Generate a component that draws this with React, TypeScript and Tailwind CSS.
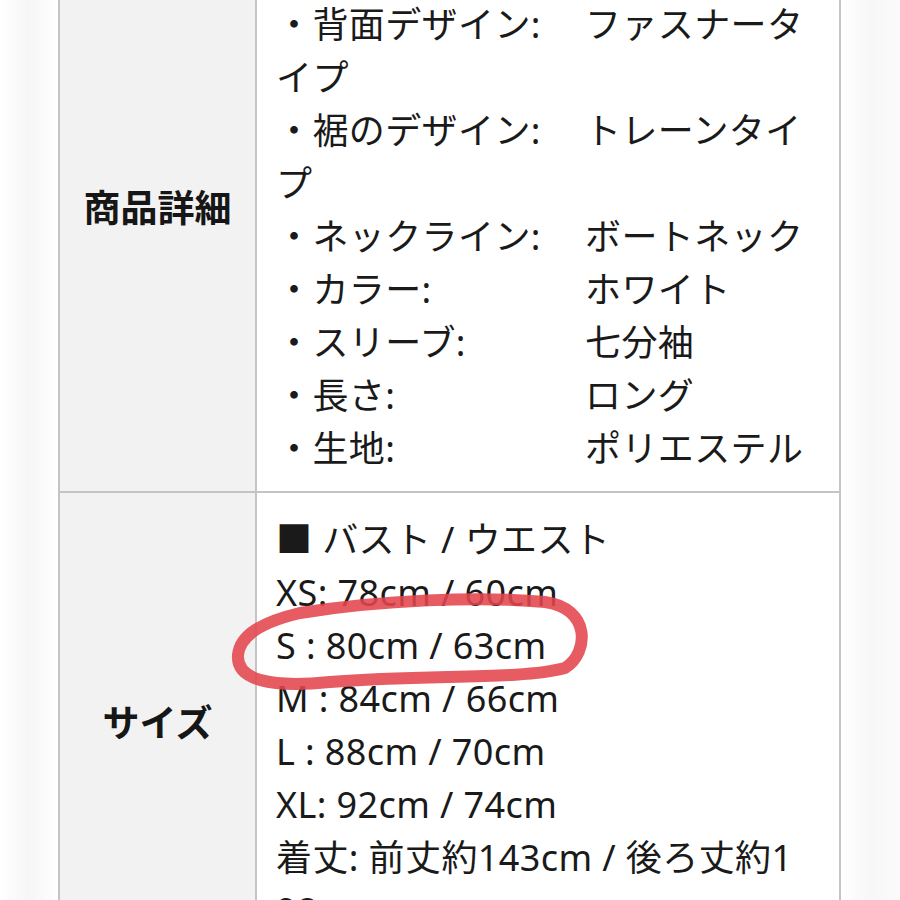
import React from 'react';

const font = { fontFamily: '"Noto Sans", "Noto Sans CJK JP", sans-serif' };

const details: [string, string][] = [
  ['・シルエット:', 'Aライン'],
  ['・背面デザイン:', 'ファスナータイプ'],
  ['・裾のデザイン:', 'トレーンタイプ'],
  ['・ネックライン:', 'ボートネック'],
  ['・カラー:', 'ホワイト'],
  ['・スリーブ:', '七分袖'],
  ['・長さ:', 'ロング'],
  ['・生地:', 'ポリエステル'],
];

const sizes = [
  '■ バスト / ウエスト',
  'XS: 78cm / 60cm',
  'S : 80cm / 63cm',
  'M : 84cm / 66cm',
  'L : 88cm / 70cm',
  'XL: 92cm / 74cm',
  '着丈: 前丈約143cm / 後ろ丈約198cm',
];

const Row: React.FC<{ label: string; children: React.ReactNode; last?: boolean }> = ({ label, children, last }) => (
  <div className={`grid grid-cols-[197px_1fr] ${last ? '' : 'border-b-2 border-[#c4c4c4]'}`}>
    <div className="bg-[#f2f2f2] border-r-2 border-[#c4c4c4] flex items-center justify-center">
      <span className="text-[37px] font-semibold text-[#161616]">{label}</span>
    </div>
    <div className="bg-white pl-[19px] pr-[34px] pt-[20px] pb-[16px] text-[36px] leading-[53px] tracking-[0.4px] break-all text-[#1a1a1a]">
      {children}
    </div>
  </div>
);

export default function App() {
  return (
    <div className="relative h-[900px] overflow-hidden bg-white" style={font}>
      <div className="flex">
        {/* left margin */}
        <div className="w-[58px] shrink-0 bg-gradient-to-r from-white via-[#f6f6f6] to-white" />

        {/* table */}
        <div className="w-[783px] shrink-0 -mt-[75px] border-x-2 border-[#c4c4c4]">
          <Row label="商品詳細">
            {details.map(([k, v]) => (
              <div key={k}>
                <span className="inline-block w-[309px]">{k}</span>
                {v}
              </div>
            ))}
          </Row>
          <Row label="サイズ" last>
            {sizes.map((s) => (
              <div key={s}>{s}</div>
            ))}
          </Row>
        </div>

        {/* right margin */}
        <div className="w-[59px] shrink-0 bg-gradient-to-r from-white via-[#f7f7f7] to-[#fbfbfb]" />
      </div>

      {/* hand-drawn red circle */}
      <svg className="absolute inset-0 pointer-events-none" width="900" height="900" viewBox="0 0 900 900">
        <path
          d="M 300 613 C 380 600, 480 596, 545 602 C 590 608, 590 652, 565 668 C 520 680, 430 674, 330 682 C 270 688, 236 680, 238 655 C 240 635, 262 622, 300 613 Z"
          fill="none"
          stroke="#e4464d"
          strokeWidth="12"
          strokeLinecap="round"
          strokeLinejoin="round"
          opacity="0.88"
        />
      </svg>
    </div>
  );
}
